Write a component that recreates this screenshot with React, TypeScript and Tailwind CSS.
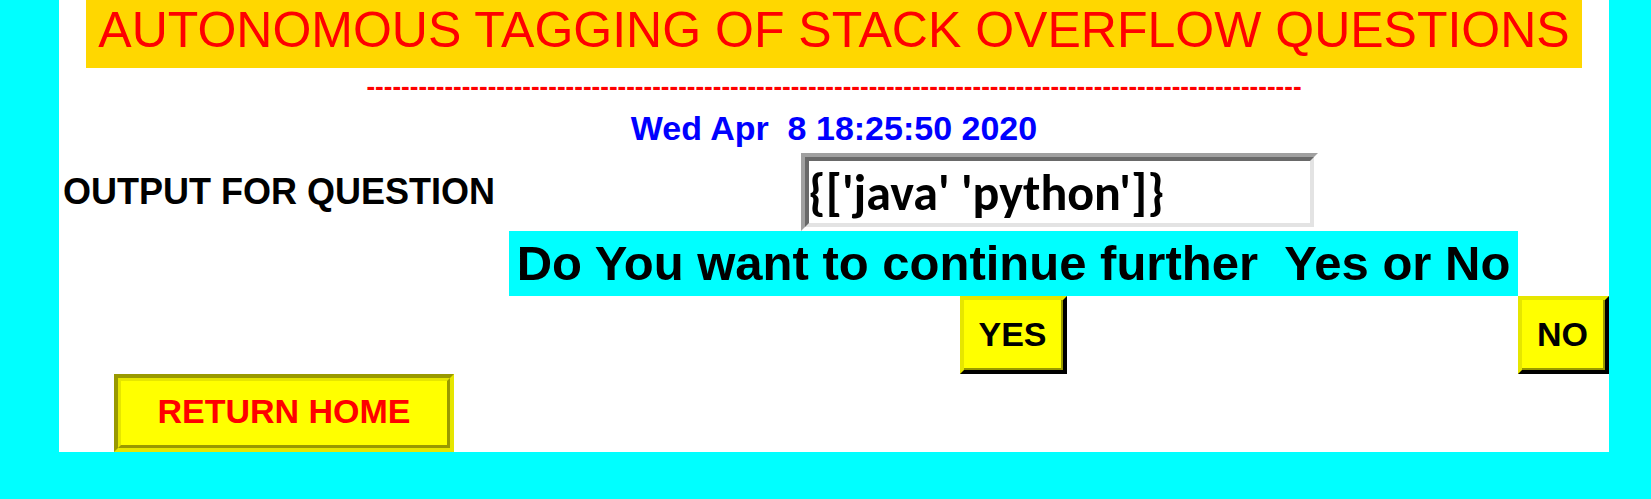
import type { ReactNode } from "react";

const RULE = "-".repeat(108);

function AnswerButton({ children }: { children: ReactNode }) {
  return (
    <button
      type="button"
      className="w-full border-4 border-t-[#e6e600] border-l-[#e6e600] border-r-black border-b-black bg-[#ffff00] text-[34px] leading-10 font-bold text-black"
    >
      <span className="block border-r-2 border-b-2 border-[#999900] px-3.5 py-3.5">
        {children}
      </span>
    </button>
  );
}

export default function App() {
  return (
    <div className="min-h-screen bg-[#00ffff] pr-[42px] pb-12 pl-[59px] font-['Liberation_Sans',Arial,sans-serif]">
      <main className="grid grid-cols-[minmax(0,450fr)_minmax(0,1009fr)_minmax(0,91fr)] items-center justify-items-center bg-white">
        <h1 className="col-span-3 bg-[#ffd700] px-3 pb-2 text-[50px] leading-[60px] whitespace-nowrap text-[#ff0000]">
          AUTONOMOUS TAGGING OF STACK OVERFLOW QUESTIONS
        </h1>

        <div
          aria-hidden="true"
          className="col-span-3 text-[26px] leading-9 font-bold whitespace-nowrap text-[#ff0000]"
        >
          {RULE}
        </div>

        <time
          dateTime="2020-04-08T18:25:50"
          className="col-span-3 text-[34px] leading-[49px] font-bold whitespace-pre text-[#0000ff]"
        >
          {"Wed Apr  8 18:25:50 2020"}
        </time>

        <label
          htmlFor="output"
          className="justify-self-start pl-1 text-4xl font-bold whitespace-nowrap text-black"
        >
          OUTPUT FOR QUESTION
        </label>
        <div className="col-span-2 w-[517px] border-4 border-t-[#a0a0a0] border-r-white border-b-white border-l-[#a0a0a0]">
          <input
            id="output"
            type="text"
            defaultValue="{['java' 'python']}"
            className="block h-[70px] w-full border-4 border-t-[#696969] border-r-[#e3e3e3] border-b-[#e3e3e3] border-l-[#696969] bg-white font-[Carlito,Lato,sans-serif] text-[50px] font-bold text-black outline-none"
          />
        </div>

        <h2 className="col-start-2 w-full bg-[#00ffff] text-center text-[49px] leading-[65px] font-bold whitespace-pre text-black">
          {"Do You want to continue further  Yes or No"}
        </h2>

        <div className="col-start-2">
          <AnswerButton>YES</AnswerButton>
        </div>
        <div className="w-full">
          <AnswerButton>NO</AnswerButton>
        </div>

        <button
          type="button"
          className="col-start-1 border-4 border-t-[#999900] border-r-[#e6e600] border-b-[#e6e600] border-l-[#999900] bg-[#ffff00] text-[34px] leading-10 font-bold text-[#ff0000]"
        >
          <span className="block border-3 border-t-[#e6e600] border-r-[#999900] border-b-[#999900] border-l-[#e6e600] px-9 pt-2.5 pb-3.5">
            RETURN HOME
          </span>
        </button>
      </main>
    </div>
  );
}
